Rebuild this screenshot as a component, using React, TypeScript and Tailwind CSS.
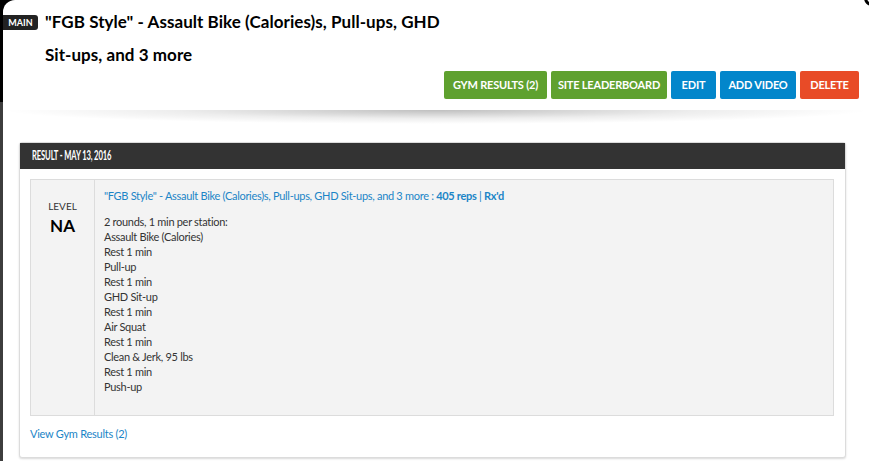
const lines = [
  "2 rounds, 1 min per station:",
  "Assault Bike (Calories)",
  "Rest 1 min",
  "Pull-up",
  "Rest 1 min",
  "GHD Sit-up",
  "Rest 1 min",
  "Air Squat",
  "Rest 1 min",
  "Clean & Jerk, 95 lbs",
  "Rest 1 min",
  "Push-up",
];

const buttons = [
  { label: "GYM RESULTS (2)", cls: "bg-[#5fa12f] w-[103px]" },
  { label: "SITE LEADERBOARD", cls: "bg-[#5fa12f] w-[116px]" },
  { label: "EDIT", cls: "bg-[#0386cb] w-[45px]" },
  { label: "ADD VIDEO", cls: "bg-[#0386cb] w-[76px]" },
  { label: "DELETE", cls: "bg-[#e84b27] w-[59px]" },
];

export default function App() {
  return (
    <div className="relative h-[461px] overflow-hidden bg-[linear-gradient(to_bottom,#000_102px,#3d3d3d_102px)] pl-[3px] font-['Lato','Open_Sans',sans-serif] text-[#333]">
      <div className="absolute left-[864px] top-[-10px] h-[16px] w-[16px] rounded-full border-[3px] border-black bg-white" />
      <div className="h-full rounded-tl-[12px] bg-white">
        <header className="h-[110px]">
          <div className="flex items-start">
            <span className="mt-[15px] flex h-[15px] w-[35px] items-center justify-center rounded-r-[3px] bg-[#222] text-[9px] font-bold leading-none text-white">
              MAIN
            </span>
            <h1 className="ml-[7px] whitespace-nowrap pt-[5px] text-[17px] font-bold leading-[33px] tracking-[0.05px] text-black">
              "FGB Style" - Assault Bike (Calories)s, Pull-ups, GHD
              <br />
              Sit-ups, and 3 more
            </h1>
          </div>
          <div className="flex justify-end gap-[4px] pr-[10px]">
            {buttons.map((b) => (
              <button
                key={b.label}
                className={`flex h-[28px] items-center justify-center rounded-[2px] text-[11px] font-bold tracking-[-0.2px] text-white ${b.cls}`}
              >
                {b.label}
              </button>
            ))}
          </div>
        </header>
        <div className="h-[14px] bg-[radial-gradient(ellipse_50%_100%_at_50%_0%,rgba(0,0,0,0.25),rgba(0,0,0,0.07)_60%,transparent_100%)]" />
        <div className="ml-[16px] mr-[23px] mt-[18px] rounded-[3px] border border-[#dcdcdc] bg-white shadow-[0_1px_2px_rgba(0,0,0,0.15)]">
          <div className="flex h-[26px] items-center bg-[#333] px-[12px] text-white">
            <span className="inline-block origin-left scale-x-[0.61] whitespace-nowrap text-[12.5px] font-bold tracking-[-0.2px]">
              RESULT - MAY 13, 2016
            </span>
          </div>
          <div className="pb-[16px] pl-[10px] pr-[11px] pt-[10px]">
            <div className="flex border border-[#dcdcdc] bg-[#f3f3f3]">
              <div className="flex w-[64px] shrink-0 flex-col items-center border-r border-[#dcdcdc] pt-[20px]">
                <span className="text-[10px] leading-[12px] text-[#333]">LEVEL</span>
                <span className="mt-[3px] text-[17px] font-bold leading-[22px] text-black">NA</span>
              </div>
              <div className="pb-[21px] pl-[9px] pt-[8px] text-[11px] leading-[15px] tracking-[-0.3px]">
                <p className="text-[#1b85c7]">
                  "FGB Style" - Assault Bike (Calories)s, Pull-ups, GHD Sit-ups, and 3 more :{" "}
                  <b>405 reps</b> | <b>Rx'd</b>
                </p>
                <div className="mt-[11px] text-[#333]">
                  {lines.map((l, i) => (
                    <p key={i}>{l}</p>
                  ))}
                </div>
              </div>
            </div>
            <p className="mt-[10px] text-[11px] leading-[15px] tracking-[-0.25px] text-[#1b85c7]">View Gym Results (2)</p>
          </div>
        </div>
      </div>
    </div>
  );
}
